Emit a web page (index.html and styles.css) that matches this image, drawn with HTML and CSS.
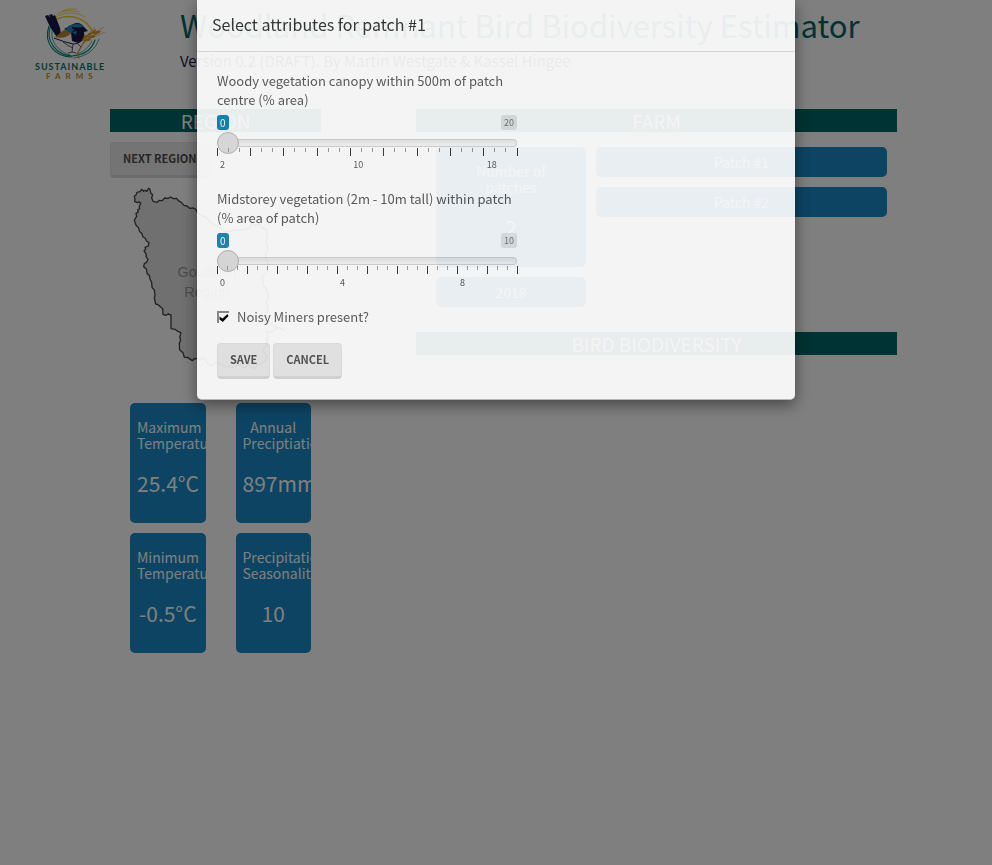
FILE: index.html
```html
<!DOCTYPE html>
<html lang="en">
<head>
<meta charset="utf-8">
<title>Woodland Remnant Bird Biodiversity Estimator</title>
<link rel="stylesheet" href="styles.css">
</head>
<body>
<header class="page-header">
  <svg class="logo" viewBox="0 0 80 80" role="img" aria-label="Sustainable Farms">
    <g fill="none" stroke-linecap="round">
      <g stroke="#00857c" stroke-width="1.1">
        <path d="M19 21C13 38 25 52 42 52"/>
        <path d="M21 20C14 36 27 50 42 51C55 50 62 44 65 35"/>
        <path d="M23 22C18 36 29 47 40 50M44 53C59 51 66 43 69 34" stroke-width=".7"/>
        <path d="M47 49C56 46 60 40 62 36" stroke-width=".6"/>
      </g>
      <g stroke="#ecd020">
        <path d="M27 14C43 7 58 16 62 26" stroke-width="1.5"/>
        <path d="M26 12C33 7 46 6 55 12M27 9C34 5 42 5 49 7M32 6Q39 3 47 4" stroke-width=".8"/>
      </g>
      <path d="M49 53L47 49L54 37L66 29" stroke="#d8982a" stroke-width="1.3"/>
    </g>
    <g fill="#191742">
      <path d="M15 11L18 10L26 20L31 29L27 32Q21 25 15 11M19 10L22 9L29 22L31 29L25 24M23 11L25 10L30 23L31 29"/>
      <path d="M34 24L43 19Q50 16 54 22L58 26L54 27Q56 35 48 38L42 36L41 28Z"/>
      <path d="M24 33Q34 37 43 39Q51 39 54 32" fill="none" stroke="#191742" stroke-width="1"/>
      <path d="M33 37Q38 41 43 43M43 39L42 47M47 38L51 42M42 47L38 48M42 47L46 48" fill="none" stroke="#191742" stroke-width=".7"/>
    </g>
    <path d="M25 32L34 25L42 27Q36 35 25 32" fill="#b8872e"/>
    <path d="M35 25Q39 18 48 19Q53 19 53 22L45 24L41 28ZM42 27L47 26L46 30Z" fill="#2286ba"/>
    <path d="M42 23L55 24" stroke="#191742" stroke-width="2"/>
    <g fill="#d8982a">
      <path d="M52 36Q53 30 57 30Q58 34 52 36M56 33Q57 28 61 27Q62 31 56 33M60 30Q62 25 66 24Q66 28 60 30M53 36Q60 37 61 34Q57 31 53 36M58 33Q64 34 66 31Q61 28 58 33M63 29Q69 30 71 26Q66 25 63 29"/>
      <path d="M64 28L74 22M60 27L65 22M66 31L75 27" stroke="#d8982a" stroke-width=".6"/>
    </g>
    <text class="logo-name" x="5" y="65">SUSTAINABLE</text>
    <text class="logo-farms" x="16" y="74">FARMS</text>
  </svg>
  <div>
    <h1 class="title">Woodland Remnant Bird Biodiversity Estimator</h1>
    <p class="version">Version 0.2 (DRAFT). By Martin Westgate &amp; Kassel Hingee</p>
  </div>
</header>

<main class="columns">
  <section>
    <h2 class="bar">REGION</h2>
    <button class="btn next" type="button">NEXT REGION</button>
    <svg class="map" viewBox="0 0 480 600" role="img" aria-label="Goulburn Region map">
      <path class="outline" d="M70 25L66 34L60 31L56 34L50 28L45 35L36 37L33 45L28 49L30 58L29 64L37 68L43 66L47 70L43 78L44 86L38 90L40 96L33 100L35 109L28 120L31 130L34 137L40 142L44 155L50 160L54 171L60 174L64 182L72 188L70 198L60 202L62 208L57 212L64 224L63 230L69 238L65 247L58 251L56 260L64 267L67 282L73 286L75 297L80 307L81 322L88 330L90 345L88 354L92 372L99 374L108 382L113 386L114 403L122 406L129 402L138 405L138 446L150 448L158 454L168 458L164 472L167 480L163 490L164 510L174 518L178 532L187 532L202 542L207 537L217 535L225 540L233 532L243 545L262 560L270 546L284 552L300 560L322 562L340 555L360 562L372 555L388 568L397 555L410 550L423 540L426 527L416 517L415 506L428 495L425 480L430 470L425 455L440 456L460 443L480 452L450 437L432 428L415 430L425 415L423 399L430 386L424 370L430 350L426 330L415 315L412 290L426 276L430 250L422 237L422 220L430 205L424 190L427 168L423 147L411 144L404 132L392 136L381 129L372 145L354 150L330 150L300 156L283 140L265 132L255 126L245 113L228 106L216 95L212 87L204 84L194 85L186 78L177 76L169 67L160 62L155 55L145 56L137 51L129 55L119 54L112 62L102 61L97 67L84 64L80 54L83 44L77 39L75 28Z"/>
      <text class="map-text" x="246" y="290">Goulburn</text>
      <text class="map-text" x="246" y="350">Region</text>
    </svg>
    <div class="climate">
      <div class="card"><h3>Maximum Temperature</h3><p>25.4°C</p></div>
      <div class="card"><h3>Annual Preciptiation</h3><p>897mm</p></div>
      <div class="card"><h3>Minimum Temperature</h3><p>-0.5°C</p></div>
      <div class="card"><h3>Precipitation Seasonality</h3><p>10</p></div>
    </div>
  </section>
  <section>
    <h2 class="bar">FARM</h2>
    <div class="farm">
      <div class="stack">
        <div class="card"><h3>Number of<br>patches</h3><p>2</p></div>
        <button class="pill" type="button">2018</button>
      </div>
      <div class="stack">
        <button class="pill" type="button">Patch #1</button>
        <button class="pill" type="button">Patch #2</button>
      </div>
    </div>
    <h2 class="bar">BIRD BIODIVERSITY</h2>
  </section>
</main>

<div class="backdrop">
  <div class="modal" role="dialog" aria-labelledby="dialog-title">
    <h2 class="modal-title" id="dialog-title">Select attributes for patch #1</h2>
    <form class="modal-body">
      <div class="field">
        <label for="canopy">Woody vegetation canopy within 500m of patch centre (% area)</label>
        <div class="badges"><output class="now" for="canopy">0</output><span>20</span></div>
        <input class="slider" id="canopy" type="range" min="0" max="20" value="0">
        <svg class="ticks" data-major="9"></svg>
        <div class="scale nine"><span>2</span><span>10</span><span>18</span></div>
      </div>
      <div class="field">
        <label for="midstorey">Midstorey vegetation (2m - 10m tall) within patch (% area of patch)</label>
        <div class="badges"><output class="now" for="midstorey">0</output><span>10</span></div>
        <input class="slider" id="midstorey" type="range" min="0" max="10" value="0">
        <svg class="ticks" data-major="10"></svg>
        <div class="scale ten"><span>0</span><span>4</span><span>8</span></div>
      </div>
      <label class="check"><input type="checkbox" checked>Noisy Miners present?</label>
      <div class="actions">
        <button class="btn" type="button">SAVE</button>
        <button class="btn" type="button">CANCEL</button>
      </div>
    </form>
  </div>
</div>
<script src="ticks.js"></script>
</body>
</html>
```
FILE: styles.css
```css
* { box-sizing: border-box; }

body {
  margin: 0;
  background: #fff;
  color: #565656;
  font-family: "Noto Sans CJK SC", "Noto Sans", sans-serif;
  font-size: 13px;
  line-height: 19px;
}

h1, h2, h3, p { margin: 0; font-weight: 400; }
button, input { font: inherit; }

.page-header {
  display: grid;
  grid-template-columns: 80px 1fr;
  column-gap: 70px;
  padding: 5px 30px 0;
  height: 109px;
}
.logo { width: 80px; height: 80px; }
.logo-name, .logo-farms { font: 700 9px Lato, sans-serif; letter-spacing: 1px; fill: #00766e; }
.logo-farms { font-size: 8px; letter-spacing: 5px; fill: #c08a2c; }
.title { color: #066; font-size: 31px; line-height: 40px; white-space: nowrap; }
.version { margin-top: 6px; color: #191742; font-size: 15px; line-height: 20px; }

.columns {
  display: grid;
  grid-template-columns: 211fr 481fr;
  column-gap: 95px;
  padding: 0 95px 0 110px;
}
.bar {
  background: #066;
  color: #fff;
  font-size: 19px;
  line-height: 23px;
  text-align: center;
}

.btn {
  height: 36px;
  padding: 0 12px 1px;
  border: 1px solid #e2e2e2;
  border-bottom: 3px solid #d8d8d8;
  border-radius: 4px;
  background: #e9e9e9;
  color: #4d4d4d;
  font-size: 11px;
  font-weight: 700;
}
.next { display: block; margin-top: 10px; }

.map { display: block; width: 160px; height: 200px; margin: 2px 0 0 15px; }
.outline { fill: #e0e0e0; stroke: #444; stroke-width: 4; stroke-linejoin: round; }
.map-text { font: 43px "Liberation Sans", sans-serif; fill: #999; text-anchor: middle; }

.climate {
  display: grid;
  grid-template-columns: minmax(0, 1fr) minmax(0, 1fr);
  gap: 10px 30px;
  margin-top: 23px;
  padding: 0 10px 0 20px;
}
.card {
  height: 120px;
  padding: 16px 7px;
  overflow: hidden;
  border-radius: 5px;
  background: #1a88c6;
  color: #fff;
  text-align: center;
}
.card h3 { font-size: 14px; line-height: 16px; }
.card p { margin-top: 15px; font-size: 21px; line-height: 34px; }

.farm {
  display: grid;
  grid-template-columns: 150fr 291fr;
  gap: 10px;
  margin: 15px 0 25px;
  padding: 0 10px 0 20px;
}
.stack { display: flex; flex-direction: column; gap: 10px; }
.pill {
  height: 30px;
  border: 0;
  border-radius: 5px;
  background: #1a88c6;
  color: #fff;
  font-size: 14px;
  line-height: 16px;
}

.backdrop { position: fixed; inset: 0; background: rgba(0, 0, 0, .5); }
.modal {
  max-width: 598px;
  margin: 0 auto;
  border-bottom: 1px solid #bbb;
  border-radius: 0 0 5px 5px;
  background: #fff;
  box-shadow: 0 5px 15px rgba(0, 0, 0, .5);
  opacity: .91;
}
.modal-title {
  padding: 12px 15px 15px;
  border-bottom: 1px solid #ddd;
  color: #323232;
  font-size: 16px;
  line-height: 24px;
}
.modal-body { padding: 19px 20px 20px; }

.field { max-width: 300px; height: 118px; }
.field label { display: block; }
.badges { display: flex; justify-content: space-between; margin-top: 6px; }
.badges > * {
  padding: 0 3px;
  border-radius: 3px;
  background: rgba(0, 0, 0, .1);
  color: #777;
  font-size: 9px;
  line-height: 15px;
}
.badges .now { background: #1484b4; color: #fff; font-size: 10px; }

.slider {
  display: block;
  width: 100%;
  height: 22px;
  margin: 2px 0 0;
  padding: 0;
  appearance: none;
  background: transparent;
}
.slider::-webkit-slider-runnable-track {
  height: 8px;
  border: 1px solid #d4d4d4;
  border-left: 0;
  border-radius: 8px;
  background: linear-gradient(rgba(0, 0, 0, .1), rgba(0, 0, 0, .03));
}
.slider::-webkit-slider-thumb {
  width: 22px;
  height: 22px;
  margin-top: -8px;
  appearance: none;
  border: 1px solid #b4b4b4;
  border-radius: 50%;
  background: #dedede;
}
.ticks { display: block; width: 100%; height: 8px; margin-top: -6px; overflow: visible; stroke: #333; shape-rendering: crispEdges; }
.ticks .minor { stroke: #999; }
.scale { display: grid; font-size: 9px; line-height: 18px; }
.scale span { padding-left: 3px; }
.nine { grid-template-columns: 4fr 4fr 1fr; }
.ten { grid-template-columns: 4fr 4fr 2fr; }

.check { display: flex; align-items: center; gap: 8px; }
.check input {
  width: 12px;
  height: 12px;
  margin: 0;
  appearance: none;
  border: solid #888;
  border-width: 2px 0 0 2px;
}
.check input:checked::before {
  content: "";
  display: block;
  width: 10px;
  height: 10px;
  background: #000;
  clip-path: polygon(5% 40%, 35% 60%, 85% 15%, 95% 35%, 38% 95%, 5% 70%);
}
.actions { display: flex; gap: 3px; margin-top: 17px; }
```
FILE: ticks.js
```js
const NS = "http://www.w3.org/2000/svg";
document.querySelectorAll(".ticks").forEach((svg) => {
  const steps = Number(svg.dataset.major) * 3;
  for (let i = 0; i <= steps; i++) {
    const line = document.createElementNS(NS, "line");
    const x = `${(100 * i) / steps}%`;
    const major = i % 3 === 0;
    line.setAttribute("x1", x);
    line.setAttribute("x2", x);
    line.setAttribute("y1", 0);
    line.setAttribute("y2", major ? 8 : 4);
    if (!major) line.setAttribute("class", "minor");
    svg.append(line);
  }
});
```
